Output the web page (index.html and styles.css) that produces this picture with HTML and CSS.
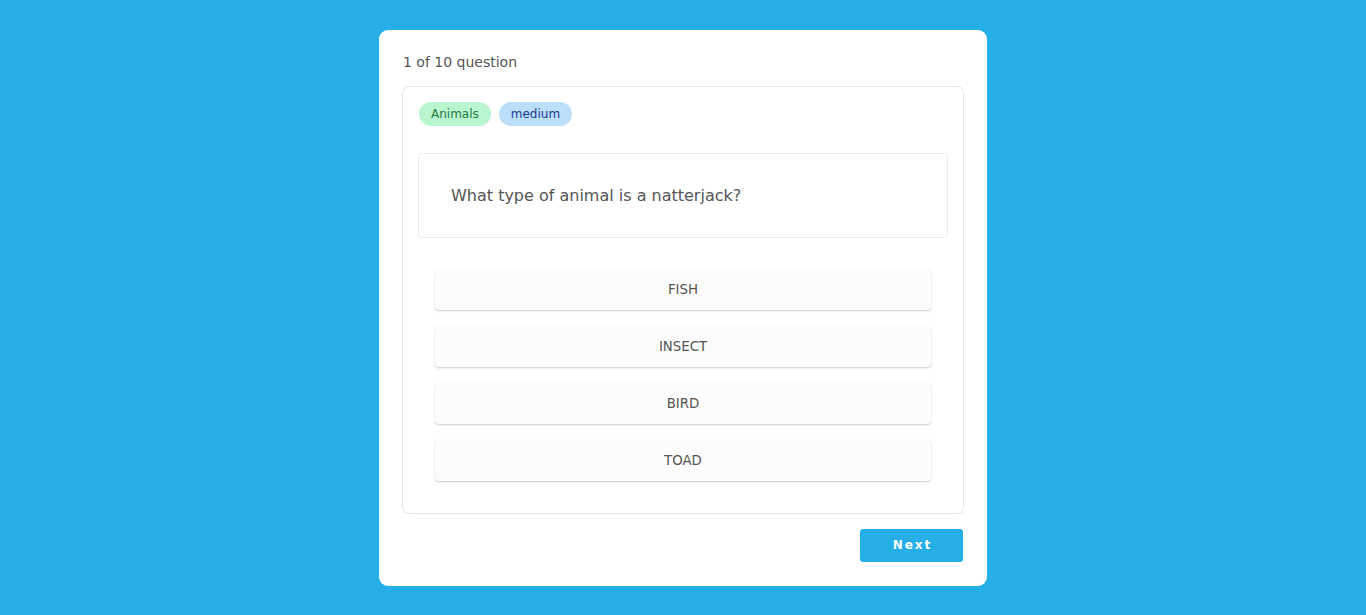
FILE: index.html
```html
<!DOCTYPE html>
<html>
<head>
<meta charset="utf-8">
<link rel="stylesheet" href="styles.css">
</head>
<body>
<main class="quiz">
  <div class="progress">1 of 10 question</div>
  <section class="panel">
    <div class="tags">
      <span class="tag tag-category">Animals</span>
      <span class="tag tag-difficulty">medium</span>
    </div>
    <div class="question">What type of animal is a natterjack?</div>
    <div class="answers">
      <button class="answer">FISH</button>
      <button class="answer">INSECT</button>
      <button class="answer">BIRD</button>
      <button class="answer">TOAD</button>
    </div>
  </section>
  <div class="actions">
    <button class="next">Next</button>
  </div>
</main>
</body>
</html>
```
FILE: styles.css
```css
* { box-sizing: border-box; }
html, body { margin: 0; padding: 0; }
body {
  background: #25afe6;
  font-family: "DejaVu Sans", sans-serif;
  color: #555;
  min-height: 615px;
  padding-top: 30px;
}
.quiz {
  width: 608px;
  margin: 0 auto;
  background: #fff;
  border-radius: 9px;
  padding: 24px;
}
.progress {
  font-size: 14px;
  line-height: 16px;
  color: #555;
  margin-bottom: 17px;
}
.panel {
  border-radius: 6px;
  box-shadow: 0 0 0 1px #e6e6e6, 0 1px 2px rgba(0,0,0,0.04);
  padding: 15px 16px 32px;
}
.tags {
  display: flex;
  gap: 8px;
}
.tag {
  height: 24px;
  line-height: 25px;
  font-size: 12px;
  padding: 0 12px;
  border-radius: 12px;
}
.tag-category { background: #b9f6d0; color: #1f7a3e; }
.tag-difficulty { background: #bbdefb; color: #1b3a8c; }
.question {
  margin-top: 28px;
  border-radius: 4px;
  box-shadow: 0 0 0 1px #ebebeb;
  padding: 32px;
  font-size: 16px;
  line-height: 19px;
  color: #555;
}
.answers {
  display: flex;
  flex-direction: column;
  gap: 16px;
  padding: 32px 16px 0;
}
.answer {
  height: 41px;
  padding: 0 0 1px;
  border: none;
  border-radius: 4px;
  background: #fcfcfc;
  box-shadow: 0 1px 2px rgba(0,0,0,0.2);
  font-family: "DejaVu Sans", sans-serif;
  font-size: 13.333px;
  color: #555;
  cursor: pointer;
}
.actions {
  display: flex;
  justify-content: flex-end;
  margin-top: 16px;
}
.next {
  width: 103px;
  height: 33px;
  padding: 0 0 1px 2px;
  border: none;
  border-radius: 3px;
  background: #25afe6;
  color: #fff;
  font-family: "DejaVu Sans", sans-serif;
  font-size: 12px;
  font-weight: bold;
  letter-spacing: 2px;
  cursor: pointer;
}
```
